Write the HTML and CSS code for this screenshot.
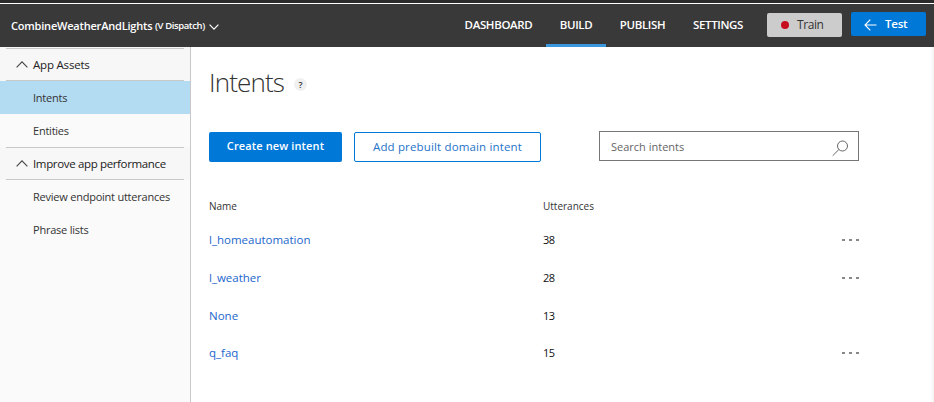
FILE: index.html
```html
<!DOCTYPE html>
<html lang="en">
<head>
<meta charset="utf-8">
<title>Intents</title>
<link rel="stylesheet" href="styles.css">
</head>
<body>
<header class="topbar">
  <div class="app-name"><span class="app-title">CombineWeatherAndLights</span><span class="app-version">(V Dispatch)</span>
    <svg class="chevron" width="10" height="6" viewBox="0 0 10 6"><path d="M.6.7 5 5.1 9.4.7"/></svg>
  </div>
  <nav class="tabs">
    <a class="tab dashboard"><span>DASHBOARD</span></a>
    <a class="tab build active"><span>BUILD</span></a>
    <a class="tab publish"><span>PUBLISH</span></a>
    <a class="tab settings"><span>SETTINGS</span></a>
  </nav>
  <button class="train"><i class="dot"></i><span>Train</span></button>
  <button class="test"><svg width="13" height="12" viewBox="0 0 13 12"><path d="M12.5 6H1M6.3.7 1 6l5.3 5.3"/></svg><span>Test</span></button>
</header>
<div class="body">
  <aside class="sidebar">
    <div class="group first"><svg class="chevron" width="12" height="7" viewBox="0 0 12 7"><path d="M.6 6.3 6 .9l5.4 5.4"/></svg><span>App Assets</span></div>
    <a class="item selected"><span>Intents</span></a>
    <a class="item"><span>Entities</span></a>
    <div class="group second"><svg class="chevron" width="12" height="7" viewBox="0 0 12 7"><path d="M.6 6.3 6 .9l5.4 5.4"/></svg><span>Improve app performance</span></div>
    <a class="item"><span>Review endpoint utterances</span></a>
    <a class="item"><span>Phrase lists</span></a>
  </aside>
  <main class="content">
    <div class="heading"><h1>Intents</h1><span class="help">?</span></div>
    <div class="actions">
      <button class="create"><span>Create new intent</span></button>
      <button class="prebuilt"><span>Add prebuilt domain intent</span></button>
      <div class="search"><span>Search intents</span><svg width="17" height="17" viewBox="0 0 17 17"><circle cx="10.5" cy="6" r="5"/><path d="M6.8 9.6.7 15.7"/></svg></div>
    </div>
    <div class="table">
      <div class="row head"><span>Name</span><span>Utterances</span></div>
      <div class="row"><a>l_homeautomation</a><span class="count">38</span><span class="more"><i></i><i></i><i></i></span></div>
      <div class="row"><a>l_weather</a><span class="count">28</span><span class="more"><i></i><i></i><i></i></span></div>
      <div class="row"><a>None</a><span class="count">13</span></div>
      <div class="row last"><a>q_faq</a><span class="count">15</span><span class="more"><i></i><i></i><i></i></span></div>
    </div>
  </main>
  <div class="edge"></div>
</div>
</body>
</html>
```
FILE: styles.css
```css
* { box-sizing: border-box; }
body { margin: 0; height: 402px; overflow: hidden; background: #fff; color: #333; font: 11px/16px "Open Sans", "Noto Sans", sans-serif; white-space: nowrap; }
button { font: inherit; padding: 0; border: 0; display: flex; align-items: center; border-radius: 2px; }
svg { flex: none; fill: none; }
h1 { margin: 0; }

.topbar { height: 47px; background: #393939; border-top: 3px solid #2b2b2b; box-shadow: inset 0 1px #fff; display: flex; color: #fff; }
.app-name { width: 445px; padding: 1px 0 0 11px; display: flex; align-items: center; }
.app-title { width: 144px; font-weight: 600; font-size: 11px; letter-spacing: -.2px; }
.app-version { width: 54px; font-weight: 600; font-size: 9.5px; letter-spacing: -.4px; }
.app-name .chevron { stroke: #fff; stroke-width: 1.2; margin-top: 2px; }
.tabs { display: flex; }
.tab { display: flex; align-items: center; justify-content: center; font-weight: 600; font-size: 11.5px; letter-spacing: -.35px; border-bottom: 3px solid transparent; padding-top: 3px; }
.dashboard { width: 101px; padding-left: 6px; }
.build { width: 60px; }
.publish { width: 73px; }
.settings { width: 78px; }
.tab.active { border-color: #3a96dd; }
.train { width: 75px; height: 24px; margin: 10px 0 0 10px; background: #ccc; color: #333; font-size: 12px; letter-spacing: -.4px; }
.dot { width: 8px; height: 8px; border-radius: 50%; background: #c50f1f; margin: 0 8px 0 14px; }
.test { width: 75px; height: 24px; margin: 9px 0 0 9px; background: #0078d7; color: #fff; font-weight: 600; font-size: 11.5px; letter-spacing: -.2px; }
.test svg { stroke: #fff; stroke-width: 1.1; margin: 2px 8px 0 13px; }

.body { display: flex; height: 355px; position: relative; }
.sidebar { width: 191px; border-right: 1px solid #c8c8c8; background: #fafafa; }
.group { height: 33px; padding: 2px 0 0 16px; display: flex; align-items: center; color: #222; font-size: 11.5px; letter-spacing: -.2px; background: linear-gradient(#c8c8c8, #c8c8c8) 6px 0 / 178px 1px no-repeat, linear-gradient(#c8c8c8, #c8c8c8) 6px 100% / 178px 1px no-repeat, #f7f7f7; }
.group.first { height: 34px; background-position: 6px 1px, 6px 100%, 0 0; }
.group.second { padding-top: 1px; letter-spacing: -.35px; }
.group .chevron { margin: -2px 5px 0 0; stroke: #444; stroke-width: 1.1; }
.item { height: 33px; padding: 1px 0 0 33px; display: flex; align-items: center; letter-spacing: -.23px; }
.item.selected { background: #b3dbf2; }

.content { padding-left: 18px; width: 743px; }
.heading { height: 84px; padding-top: 15px; display: flex; }
.heading h1 { width: 85px; font-size: 26px; font-weight: 300; line-height: 40px; letter-spacing: -.85px; }
.help { width: 13px; height: 13px; margin-top: 16px; border-radius: 50%; background: #f0f0f0; font-size: 9px; font-weight: 600; line-height: 13px; text-align: center; }
.actions { display: flex; }
.create { width: 133px; height: 30px; margin-top: 1px; padding-bottom: 2px; justify-content: center; background: #0078d7; color: #fff; font-weight: 600; letter-spacing: .12px; }
.prebuilt { width: 187px; height: 30px; margin: 1px 58px 0 12px; justify-content: center; background: #fff; color: #2472c8; border: 1px solid #0078d7; font-size: 11.5px; letter-spacing: .15px; }
.search { width: 260px; height: 30px; border: 1px solid #767676; display: flex; align-items: center; justify-content: space-between; padding: 2px 9px 0 11px; color: #666; }
.search svg { stroke: #666; margin-top: 2px; }

.table { padding-top: 29px; width: 651px; }
.row { height: 38px; display: grid; grid-template-columns: 334px 299px 18px; align-items: center; }
.row.head { height: 30px; font-size: 10px; }
.row.last { height: 36px; }
.row a { color: #2266cc; font-size: 11.5px; font-weight: 500; }
.count { color: #111; letter-spacing: -.5px; }
.more { display: flex; gap: 4px; }
.more i { width: 3px; height: 2px; background: #888; }
.edge { position: absolute; right: 0; top: 0; width: 4px; height: 100%; background: linear-gradient(90deg, #fff, #f3f3f3); }
```
